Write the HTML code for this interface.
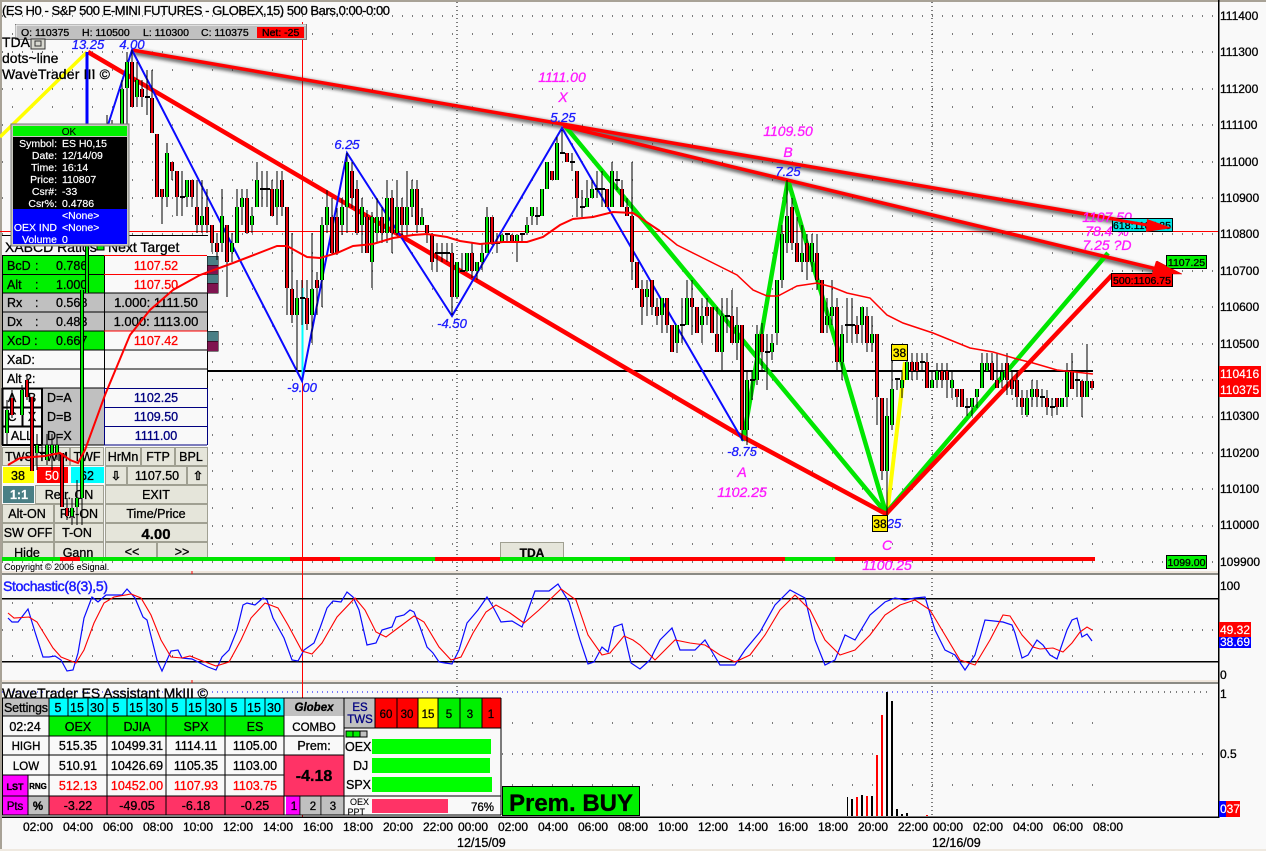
<!DOCTYPE html>
<html><head><meta charset="utf-8"><title>ES H0</title>
<style>
html,body{margin:0;padding:0;background:#f9f9f9;overflow:hidden}
svg{display:block;font-family:"Liberation Sans",Arial,sans-serif}
text{stroke-width:.3;white-space:pre}
.k{fill:#000;stroke:#000}.r{fill:#f00;stroke:#f00}.n{fill:#000080;stroke:#000080}.b{fill:#1a1aff;stroke:#1a1aff}
.m{fill:#ff1aff;stroke:#ff1aff}.w{fill:#fff;stroke:#fff;stroke-width:.2}
.c{text-anchor:middle}.e{text-anchor:end}.i{font-style:italic}
.btn{fill:#e5e5da;stroke:#a0a092}
.cr{shape-rendering:crispEdges}
</style></head><body>
<svg width="1266" height="851" viewBox="0 0 1266 851" xmlns="http://www.w3.org/2000/svg">
<defs><filter id="bl" filterUnits="userSpaceOnUse" x="100" y="30" width="1120" height="280"><feGaussianBlur stdDeviation="1.5"/></filter></defs>
<rect width="1266" height="851" fill="#f9f9f9"/>
<!-- borders -->
<g class="cr">
<rect x="0" y="0" width="1266" height="2" fill="#a8a296"/>
<rect x="0" y="0" width="2" height="851" fill="#a8a296"/>
<rect x="0" y="849" width="1266" height="2" fill="#efe9e0"/>
<!-- grid main rows -->
<path d="M2 16H1215M2 52H1215M2 89H1215M2 125H1215M2 162H1215M2 198H1215M2 234H1215M2 271H1215M2 307H1215M2 344H1215M2 380H1215M2 417H1215M2 453H1215M2 489H1215M2 526H1215M2 562H1215M2 630H1215M2 754H1208" stroke="#000" stroke-dasharray="1 9" fill="none"/>
<path d="M12 34H1093M12 70H1093M12 107H1093M12 144H1093M12 180H1093M12 216H1093M12 253H1093M12 289H1093M12 326H1093M12 362H1093M12 399H1093M12 435H1093M12 471H1093M12 508H1093M12 544H1093M12 603H1093M12 656H1093M12 723H1093M12 785H1093" stroke="#000" stroke-dasharray="1 19" fill="none"/>
<path d="M2 692H1090" stroke="#0000ff" stroke-dasharray="1 4" fill="none"/>
<path d="M1092 692H1208" stroke="#000" stroke-dasharray="1 5" fill="none"/>
<path d="M457 2V817M932 2V817" stroke="#000" stroke-dasharray="1 3" fill="none"/>
<path d="M0 231.5H1218" stroke="#f00"/>
<!-- separators -->
<rect x="2" y="571" width="1216" height="2" fill="#efe6dc"/><rect x="2" y="573" width="1216" height="2" fill="#8a8a84"/>
<rect x="2" y="680" width="1216" height="2" fill="#efe6dc"/><rect x="2" y="682" width="1216" height="2" fill="#8a8a84"/>
<path d="M192 571v3M192 680v3" stroke="#f00"/>
</g>

<!-- LEFT PANEL -->
<g class="cr">
<rect x="2" y="235" width="206" height="325" fill="#f9f9f9"/>
<path d="M2 235.5H208" stroke="#000"/>
<rect x="2" y="256" width="102" height="37" fill="#00f000"/>
<rect x="2" y="293" width="102" height="38" fill="#c0c0c0"/>
<rect x="104" y="293" width="103" height="38" fill="#c0c0c0"/>
<rect x="2" y="331" width="102" height="19" fill="#00f000"/>
<rect x="42" y="388" width="62" height="57" fill="#c0c0c0"/>
<path d="M2 255.5H104M2 274.5H104M2 293H207M2 312H207M2 331H104M2 350H207M2 369H207M2 388H104M2 445H207M2.5 256V445M104.5 256V388M207.5 256V388" stroke="#000" fill="none"/>
<path d="M104 255.5H207M104 274.5H207M104 331H207" stroke="#f00" fill="none"/>
<path d="M104 388.5H207M104 407.5H207M104 426.5H207M104 445H207M104.5 388V445M207.5 388V445" stroke="#000080" fill="none"/>
<path d="M2 388.5H42M2 407.5H42M2 426.5H42M2 445H42M2.5 388V445M22.5 388V426M42 388V445" stroke="#000" stroke-width="2" fill="none"/>
<rect x="207" y="256" width="11" height="9" fill="#4a7f85" stroke="#000" stroke-width=".5"/>
<rect x="207" y="265" width="11" height="9" fill="#7f1450" stroke="#000" stroke-width=".5"/>
<rect x="207" y="274" width="11" height="9" fill="#4a7f85" stroke="#000" stroke-width=".5"/>
<rect x="207" y="283" width="11" height="10" fill="#7f1450" stroke="#000" stroke-width=".5"/>
<rect x="207" y="331" width="11" height="10" fill="#4a7f85" stroke="#000" stroke-width=".5"/>
<rect x="207" y="341" width="11" height="10" fill="#7f1450" stroke="#000" stroke-width=".5"/>
<rect x="97" y="241" width="7" height="9" fill="#00f000" stroke="#000"/>
<!-- buttons -->
<rect class="btn" x="2.5" y="447.5" width="33" height="18"/><rect class="btn" x="36.5" y="447.5" width="33" height="18"/><rect class="btn" x="70.5" y="447.5" width="33" height="18"/>
<rect class="btn" x="105.5" y="447.5" width="35" height="18"/><rect class="btn" x="141.5" y="447.5" width="33" height="18"/><rect class="btn" x="175.5" y="447.5" width="32" height="18"/>
<rect x="3" y="467" width="31" height="16" fill="#ff0"/><rect x="37" y="467" width="31" height="16" fill="#f00"/><rect x="71" y="467" width="33" height="16" fill="#0ff"/>
<rect class="btn" x="105.5" y="466.5" width="21" height="18"/><rect class="btn" x="127.5" y="466.5" width="59" height="18"/><rect class="btn" x="187.5" y="466.5" width="20" height="18"/>
<rect x="3" y="486" width="31" height="17" fill="#4a7f85"/>
<rect class="btn" x="35.5" y="485.5" width="68" height="18"/><rect class="btn" x="105.5" y="485.5" width="102" height="18"/>
<rect class="btn" x="2.5" y="504.5" width="51" height="18"/><rect class="btn" x="54.5" y="504.5" width="49" height="18"/><rect class="btn" x="105.5" y="504.5" width="102" height="18"/>
<rect class="btn" x="2.5" y="523.5" width="51" height="18"/><rect class="btn" x="54.5" y="523.5" width="49" height="18"/><rect class="btn" x="105.5" y="523.5" width="102" height="18"/>
<rect class="btn" x="2.5" y="542.5" width="51" height="15"/><rect class="btn" x="54.5" y="542.5" width="49" height="15"/><rect class="btn" x="105.5" y="542.5" width="51" height="15"/><rect class="btn" x="157.5" y="542.5" width="50" height="15"/>
<rect class="btn" x="500.5" y="542.5" width="63" height="18"/>
</g>
<g style="font-size:14px">
<text x="5" y="252" class="k">XABCD Ratios</text><text x="108" y="252" class="k">Next Target</text>
</g>
<g style="font-size:12.5px">
<text x="7" y="270" class="k">BcD</text><text x="35" y="270" class="k">:</text><text x="56" y="270" class="k">0.786</text>
<text x="7" y="289" class="k">Alt</text><text x="35" y="289" class="k">:</text><text x="56" y="289" class="k">1.000</text>
<text x="7" y="307" class="k">Rx</text><text x="35" y="307" class="k">:</text><text x="56" y="307" class="k">0.568</text>
<text x="7" y="326" class="k">Dx</text><text x="35" y="326" class="k">:</text><text x="56" y="326" class="k">0.483</text>
<text x="7" y="345" class="k">XcD :</text><text x="56" y="345" class="k">0.667</text>
<text x="7" y="364" class="k">XaD:</text><text x="7" y="383" class="k">Alt 2:</text>
<text x="156" y="270" class="r c">1107.52</text><text x="156" y="289" class="r c">1107.50</text>
<text x="156" y="307" class="k c" style="font-size:13px">1.000: 1111.50</text><text x="156" y="326" class="k c" style="font-size:13px">1.000: 1113.00</text>
<text x="156" y="345" class="r c">1107.42</text>
<text x="12" y="402" class="k c">A</text><text x="32" y="402" class="k c">B</text><text x="12" y="421" class="k c">C</text><text x="32" y="421" class="k c">X</text><text x="22" y="440" class="k c">ALL</text>
<text x="47" y="402" class="k">D=A</text><text x="47" y="421" class="k">D=B</text><text x="47" y="440" class="k">D=X</text>
<text x="156" y="402" class="n c">1102.25</text><text x="156" y="421" class="n c">1109.50</text><text x="156" y="440" class="n c">1111.00</text>
<text x="19" y="461" class="k c">TWS</text><text x="53" y="461" class="k c">TWM</text><text x="87" y="461" class="k c">TWF</text><text x="123" y="461" class="k c">HrMn</text><text x="158" y="461" class="k c">FTP</text><text x="191" y="461" class="k c">BPL</text>
<text x="18" y="480" class="k c">38</text><text x="52" y="480" class="w c">50</text><text x="87" y="480" class="k c">62</text>
<text x="116" y="480" class="k c" style="font-family:'DejaVu Sans';font-weight:bold">⇩</text><text x="157" y="480" class="k c">1107.50</text><text x="198" y="480" class="k c" style="font-family:'DejaVu Sans';font-weight:bold">⇧</text>
<text x="19" y="499" class="w c" style="font-weight:bold">1:1</text><text x="69" y="499" class="k c">Retr. ON</text><text x="156" y="499" class="k c">EXIT</text>
<text x="27" y="518" class="k c">Alt-ON</text><text x="79" y="518" class="k c">Rx-ON</text><text x="156" y="518" class="k c">Time/Price</text>
<text x="28" y="537" class="k c">SW OFF</text><text x="77" y="537" class="k c">T-ON</text>
<text x="27" y="557" class="k c">Hide</text><text x="78" y="557" class="k c">Gann</text><text x="132" y="556" class="k c">&lt;&lt;</text><text x="182" y="556" class="k c">&gt;&gt;</text>
</g>
<text x="156" y="539" class="k c" style="font-size:15px;font-weight:bold">4.00</text>
<text x="532" y="557" class="k c" style="font-size:12px;font-weight:bold">TDA</text>
<!-- status strip -->
<g class="cr">
<rect x="2" y="557" width="1093" height="4" fill="#00e600"/>
<rect x="60" y="557" width="20" height="4" fill="#f00"/><rect x="290" y="557" width="50" height="4" fill="#f00"/><rect x="435" y="557" width="65" height="4" fill="#f00"/>
<rect x="630" y="557" width="155" height="4" fill="#f00"/><rect x="835" y="557" width="260" height="4" fill="#f00"/>
</g>
<text x="4" y="570" class="k" style="font-size:9px;stroke-width:.1">Copyright © 2006 eSignal.</text>

<!-- horizontal black -->
<path class="cr" d="M208 371H1093" stroke="#000" stroke-width="2"/>
<!-- vertical cursor -->
<path class="cr" d="M302.5 22V817" stroke="#f00"/>
<path class="cr" d="M302.5 288V380" stroke="#0ff" stroke-width="2"/>

<!-- shadows + arrows -->
<g filter="url(#bl)" stroke="#222" stroke-width="6" fill="none" opacity=".62">
<path d="M134 52L1150 227M565 128L1160 272"/>
</g>
<path d="M0 137L87 52" stroke="#ffff00" stroke-width="3.5" fill="none"/>
<path d="M887 515L905 362" stroke="#ffff00" stroke-width="4" fill="none"/>
<path d="M565 126L886 513M743 441L788 180L886 513L1108 253" stroke="#00e600" stroke-width="4.5" fill="none"/>
<path d="M88 52L743 437L886 514L1112 275" stroke="#f00" stroke-width="4.5" fill="none"/>
<path d="M132 50L1155 226M563 126L1165 271" stroke="#f00" stroke-width="3.5" fill="none"/>
<path d="M1157 261L1182 274L1153 274Z" fill="#f00" stroke="#c00" stroke-width=".5"/>
<!-- blue -->
<path d="M87 52V125" stroke="#0000ff" stroke-width="3" fill="none"/>
<path d="M108 125L132 50L302 381L347 153L452 316L562 128L743 441" stroke="#0a0aff" stroke-width="2" fill="none"/>

<!-- CANDLES -->
<g class="cr" fill="none">
<path stroke="#000" d="M7 400V445M12 390V418M22 385V418M27 375V400M32 397V471M37 434V470M42 445V460M47 434V465M52 434V470M57 434V460M62 453V507M67 498V520M72 498V525M77 480V525M82 290V525M107 115V124M112 120V124M122 80V124M127 52V124M132 50V107M137 62V107M142 80V107M147 70V115M152 70V133M157 134V197M162 189V224M167 143V207M172 162V180M177 171V216M182 171V216M187 180V207M192 180V207M197 180V233M202 180V233M207 189V233M212 225V252M217 233V260M222 189V252M227 225V297M232 233V262M237 189V243M242 189V225M247 189V234M252 207V233M257 162V207M262 171V207M267 171V207M272 180V216M277 171V225M282 171V216M287 207V315M292 233V323M297 280V370M302 280V325M307 280V330M312 233V343M317 272V315M322 217V307M327 190V233M332 198V255M337 208V255M342 198V235M347 153V233M352 162V208M357 180V235M362 198V253M367 210V253M372 212V288M377 198V243M382 207V243M387 180V243M392 190V253M397 180V235M402 198V235M407 171V235M412 180V217M417 180V233M422 208V225M427 225V243M432 233V270M437 243V272M442 243V262M447 243V262M452 243V315M457 262V298M462 253V272M467 253V272M472 243V278M477 262V280M482 243V270M487 207V253M492 217V245M497 233V253M502 234V243M507 233V243M512 234V243M517 234V262M522 233V242M527 217V235M532 207V225M537 207V225M542 189V216M547 162V189M552 171V180M557 137V180M562 130V153M567 153V162M572 153V171M577 171V217M582 190V217M587 180V207M592 180V198M597 171V198M602 171V207M607 189V207M612 162V207M617 171V190M622 180V207M627 198V216M632 162V280M637 262V288M642 280V325M647 280V316M652 280V315M657 298V325M662 298V333M667 298V333M672 325V352M677 325V353M682 298V343M687 280V325M692 280V335M697 307V333M702 298V343M707 298V325M712 307V333M717 307V352M722 298V370M727 298V333M732 290V343M737 307V360M742 325V440M747 370V445M752 370V400M757 325V385M762 323V370M767 334V390M772 334V360M777 280V345M782 225V288M787 180V253M792 198V250M797 217V262M802 225V272M807 234V280M812 234V272M817 234V290M822 280V333M827 298V333M832 280V325M837 298V370M842 325V380M847 298V343M852 298V343M857 316V343M862 307V343M867 307V352M872 316V352M877 334V425M882 398V480M887 398V515M892 360V430M897 379V390M902 370V398M907 353V380M912 353V380M917 353V380M922 353V372M927 353V388M932 372V388M937 363V388M942 363V388M947 363V398M952 372V398M957 389V407M962 389V407M967 398V416M972 398V416M977 389V408M982 353V388M987 353V371M992 353V380M997 353V388M1002 363V388M1007 353V395M1012 372V395M1017 372V407M1022 390V415M1027 390V417M1032 380V407M1037 380V407M1042 389V407M1047 390V415M1052 398V416M1057 398V415M1062 398V407M1067 363V407M1072 353V389M1077 372V397M1082 380V417M1087 344V397M1092 381V390"/>
<path stroke="#000" stroke-width="2" d="M40 453h5M145 97h5M180 197h5M260 189h5M265 189h5M435 253h5M440 253h5M445 253h5M460 271h5M495 243h5M505 234h5M520 234h5M535 216h5M560 153h5M570 162h5M580 207h5M595 189h5M600 189h5M615 180h5M680 325h5M725 316h5M750 380h5M765 352h5M845 325h5M850 325h5M895 379h5M920 362h5M965 407h5M1040 397h5M1050 407h5M1075 380h5M300 298h5"/>
<g stroke="#000" stroke-width="4">
<path d="M7 410V433M22 390V415M37 445V453M47 445V460M52 445V453M57 445V453M72 508V516M77 498V507M82 290V498M87 245V293M122 89V124M127 62V88M137 80V97M167 153V197M187 180V197M202 216V225M222 216V243M232 243V252M237 207V243M242 198V207M252 216V225M257 180V207M277 189V207M297 298V315M312 289V315M322 225V280M327 207V225M342 207V225M347 162V207M362 207V225M372 217V262M377 217V233M387 198V233M397 207V233M407 207V225M412 189V207M422 217V225M457 262V297M467 253V271M477 262V271M482 253V262M487 217V253M502 235V243M517 235V243M527 225V233M532 207V216M542 189V216M547 162V189M557 143V180M587 198V207M592 189V198M612 171V207M647 289V297M662 298V315M677 325V343M687 298V325M702 316V325M722 316V352M737 325V343M747 380V430M757 334V380M772 343V352M777 280V333M782 234V280M787 216V243M802 253V262M812 243V262M827 316V325M832 307V316M842 334V362M862 307V325M872 334V343M887 416V471M892 389V425M902 380V388M907 362V380M932 380V388M937 371V380M952 380V388M972 398V407M977 389V397M982 363V388M987 363V371M1002 372V380M1027 398V415M1032 389V397M1062 398V407M1067 372V397M1087 381V397"/>
<path d="M12 398V415M27 380V397M32 397V471M62 453V507M67 508V516M132 62V107M142 89V97M152 98V133M157 134V197M162 189V197M172 162V171M177 171V197M192 180V197M197 207V225M207 207V225M212 225V243M217 243V252M227 225V262M247 198V233M272 189V216M282 180V207M287 207V288M292 289V315M307 298V324M317 280V288M332 217V253M337 217V253M352 171V198M357 189V233M367 217V253M382 217V233M392 198V233M402 207V225M417 189V225M427 225V233M432 235V262M452 253V297M472 253V271M492 217V243M512 235V243M552 171V180M567 153V162M577 171V198M607 189V207M622 189V207M627 207V216M632 216V262M637 262V288M642 289V307M652 280V307M657 307V316M667 298V325M672 325V352M692 298V307M697 307V333M707 307V316M712 307V333M717 334V352M732 316V343M742 325V430M762 334V352M792 207V243M797 243V262M807 243V262M817 253V280M822 280V333M837 307V362M857 325V334M867 316V343M877 334V397M882 398V471M912 362V371M917 362V371M927 362V388M942 371V380M947 371V380M957 389V397M962 389V407M992 363V380M997 380V388M1007 363V380M1012 380V389M1017 380V397M1022 398V407M1037 389V397M1047 398V407M1057 398V407M1072 372V389M1082 381V397M1092 381V388"/>
</g>
<g stroke-width="2">
<path stroke="#00e600" d="M7 410V433M22 390V415M37 445V453M47 445V460M52 445V453M57 445V453M72 508V516M77 498V507M82 290V498M87 245V293M122 89V124M127 62V88M137 80V97M167 153V197M187 180V197M202 216V225M222 216V243M232 243V252M237 207V243M242 198V207M252 216V225M257 180V207M277 189V207M297 298V315M312 289V315M322 225V280M327 207V225M342 207V225M347 162V207M362 207V225M372 217V262M377 217V233M387 198V233M397 207V233M407 207V225M412 189V207M422 217V225M457 262V297M467 253V271M477 262V271M482 253V262M487 217V253M502 235V243M517 235V243M527 225V233M532 207V216M542 189V216M547 162V189M557 143V180M587 198V207M592 189V198M612 171V207M647 289V297M662 298V315M677 325V343M687 298V325M702 316V325M722 316V352M737 325V343M747 380V430M757 334V380M772 343V352M777 280V333M782 234V280M787 216V243M802 253V262M812 243V262M827 316V325M832 307V316M842 334V362M862 307V325M872 334V343M887 416V471M892 389V425M902 380V388M907 362V380M932 380V388M937 371V380M952 380V388M972 398V407M977 389V397M982 363V388M987 363V371M1002 372V380M1027 398V415M1032 389V397M1062 398V407M1067 372V397M1087 381V397"/>
<path stroke="#e8000a" d="M12 398V415M27 380V397M32 397V471M62 453V507M67 508V516M132 62V107M142 89V97M152 98V133M157 134V197M162 189V197M172 162V171M177 171V197M192 180V197M197 207V225M207 207V225M212 225V243M217 243V252M227 225V262M247 198V233M272 189V216M282 180V207M287 207V288M292 289V315M307 298V324M317 280V288M332 217V253M337 217V253M352 171V198M357 189V233M367 217V253M382 217V233M392 198V233M402 207V225M417 189V225M427 225V233M432 235V262M452 253V297M472 253V271M492 217V243M512 235V243M552 171V180M567 153V162M577 171V198M607 189V207M622 189V207M627 207V216M632 216V262M637 262V288M642 289V307M652 280V307M657 307V316M667 298V325M672 325V352M692 298V307M697 307V333M707 307V316M712 307V333M717 334V352M732 316V343M742 325V430M762 334V352M792 207V243M797 243V262M807 243V262M817 253V280M822 280V333M837 307V362M857 325V334M867 316V343M877 334V397M882 398V471M912 362V371M917 362V371M927 362V388M942 371V380M947 371V380M957 389V397M962 389V407M992 363V380M997 380V388M1007 363V380M1012 380V389M1017 380V397M1022 398V407M1037 389V397M1047 398V407M1057 398V407M1072 372V389M1082 381V397M1092 381V388"/>
</g>
</g>

<!-- moving average -->
<path d="M8 465L20 458L45 456L60 453L70 460L78 463L85 450L105 395L130 335L150 310L173 290L200 275L233 263L277 246L287 246L307 257L320 258L337 253L353 246L373 244L393 238L413 235L427 234L447 237L460 241L480 244L503 242L527 242L543 237L560 225L573 219L593 217L613 212L633 213L660 231" stroke="#f00" stroke-width="2" fill="none"/>
<path d="M660 231L677 245L697 255L717 265L737 275L753 290L767 296L778 296L797 286L817 283L832 287L847 293L870 298L887 315L903 323L933 333L970 348L993 352L1017 359L1033 363L1057 370L1093 374" stroke="#f00" stroke-width="1.5" fill="none"/>

<!-- stochastic -->
<path class="cr" d="M2 598.5H1218M2 661.5H1218" stroke="#000" fill="none" stroke-width="1.5"/>
<polyline fill="none" stroke="#0a0aff" stroke-width="1.2" points="8,618 12,622 18,622 28,609 35,632 43,657 49,657 55,656 61,660 67,671 73,670 78,653 84,618 92,597 98,602 106,595 122,595 127,589 135,598 143,617 147,620 157,660 162,671 171,651 178,650 182,658 192,659 200,663 208,667 216,670 222,657 229,650 237,630 243,605 247,603 255,605 263,598 267,600 273,618 284,638 292,660 298,661 304,650 314,643 320,628 327,608 333,601 341,602 347,592 353,597 359,610 367,645 376,643 382,630 392,627 396,617 404,615 410,610 414,612 420,627 427,647 433,653 439,662 445,663 452,664 459,650 467,623 478,610 487,597 492,605 501,622 512,621 522,627 535,591 549,591 558,584 569,602 580,640 588,664 594,662 602,647 608,652 614,627 622,624 631,663 640,669 650,660 660,640 672,628 680,650 695,650 705,640 720,665 735,665 745,650 760,632 775,605 790,590 805,598 815,640 825,665 835,660 845,635 855,640 870,615 885,602 895,598 905,600 915,598 925,597 935,630 945,650 955,655 965,670 975,655 985,620 1003,622 1012,625 1015,633 1022,658 1028,655 1037,640 1043,645 1050,655 1057,659 1067,630 1072,620 1077,618 1082,637 1087,634 1092,641"/>
<polyline fill="none" stroke="#f00" stroke-width="1.1" points="8,613 14,618 29,617 37,622 45,635 53,648 61,657 76,663 84,650 94,623 104,603 114,597 131,594 141,598 151,615 161,640 171,657 182,658 190,656 200,660 216,666 229,662 241,640 251,618 265,603 278,608 288,625 302,651 312,654 322,643 337,617 355,598 365,610 376,632 386,637 398,628 414,616 424,622 439,647 451,660 461,657 473,633 486,612 496,605 510,613 524,623 539,610 561,589 576,600 588,635 602,655 610,653 624,636 633,640 640,645 655,660 665,650 675,640 690,643 705,645 720,655 735,662 750,655 765,635 780,610 795,595 810,610 825,640 840,655 855,650 870,635 885,615 900,605 915,600 930,610 945,635 960,660 975,665 990,640 1003,615 1010,616 1022,635 1033,647 1040,649 1053,648 1063,652 1072,643 1080,632 1087,627 1092,630"/>
<text x="3" y="591" class="b" style="font-size:14px;stroke-width:.45" textLength="105">Stochastic(8(3),5)</text>

<!-- volume bars -->
<g class="cr">
<rect x="847" y="797" width="1" height="19" fill="#000"/><rect x="851" y="799" width="2" height="17" fill="#000"/><rect x="856" y="797" width="2" height="19" fill="#f00"/><rect x="861" y="795" width="2" height="21" fill="#000"/><rect x="866" y="796" width="2" height="20" fill="#f00"/><rect x="871" y="796" width="2" height="20" fill="#000"/><rect x="876" y="755" width="2" height="61" fill="#f00"/><rect x="881" y="715" width="2" height="101" fill="#f00"/><rect x="886" y="692" width="2" height="124" fill="#000"/><rect x="891" y="701" width="2" height="115" fill="#000"/><rect x="896" y="809" width="2" height="7" fill="#000"/><rect x="901" y="814" width="2" height="2" fill="#000"/><rect x="906" y="813" width="2" height="3" fill="#000"/><rect x="926" y="815" width="2" height="1" fill="#f00"/>
</g>

<!-- ASSISTANT TABLE -->
<g class="cr">
<rect x="2" y="698" width="47" height="18" fill="#c0c0c0"/>
<rect x="49" y="698" width="235" height="18" fill="#00ffff"/>
<rect x="49" y="716" width="235" height="20" fill="#00f000"/>
<rect x="2" y="716" width="47" height="59" fill="#f9f9f9"/><rect x="49" y="736" width="235" height="39" fill="#f9f9f9"/>
<rect x="2" y="775" width="26" height="21" fill="#ff00ff"/>
<rect x="2" y="796" width="26" height="19" fill="#ff00ff"/>
<rect x="28" y="796" width="21" height="19" fill="#c0c0c0"/>
<rect x="28" y="775" width="21" height="21" fill="#f9f9f9"/>
<rect x="49" y="775" width="235" height="21" fill="#f9f9f9"/>
<rect x="49" y="796" width="235" height="19" fill="#ff3366"/>
<rect x="284" y="698" width="60" height="18" fill="#c0c0c0"/>
<rect x="284" y="716" width="60" height="39" fill="#f9f9f9"/>
<rect x="284" y="755" width="60" height="41" fill="#ff3366"/>
<rect x="286" y="796" width="14" height="19" fill="#ff00ff"/>
<rect x="301" y="796" width="20" height="19" fill="#c0c0c0"/><rect x="322" y="796" width="22" height="19" fill="#c0c0c0"/>
<rect x="344" y="698" width="31" height="30" fill="#c0c0c0"/>
<rect x="375" y="698" width="43" height="30" fill="#f00"/><rect x="418" y="698" width="20" height="30" fill="#ff0"/><rect x="438" y="698" width="44" height="30" fill="#00f000"/><rect x="482" y="698" width="19" height="30" fill="#f00"/>
<rect x="344" y="728" width="157" height="87" fill="#f9f9f9"/>
<rect x="346" y="731" width="7" height="6" fill="#00f000" stroke="#000"/><rect x="353" y="731" width="7" height="6" fill="#00f000" stroke="#000"/><rect x="360" y="731" width="7" height="6" fill="#c0c0c0" stroke="#000"/>
<rect x="372" y="739" width="119" height="15" fill="#00ff00"/><rect x="372" y="758" width="118" height="15" fill="#00ff00"/><rect x="372" y="777" width="120" height="15" fill="#00ff00"/><rect x="372" y="799" width="76" height="14" fill="#ff3366"/>
<path fill="none" stroke="#000" d="M2 698H501M2 716H284M2 736H344M2 755H344M2 775H284M2 796H501M2 815H501M2.5 698V815M49 698V815M107 716V815M166 716V815M225 716V815M284 698V815M344 698V815M375 698V728M397 698V728M418 698V728M438 698V728M460 698V728M482 698V728M501 698V815M344 728H501M28 775V815M300 796V815M321 796V815M68 698V716M88 698V716M127 698V716M147 698V716M186 698V716M206 698V716M245 698V716M265 698V716M107 698V716M166 698V716M225 698V716"/>
<rect x="502.5" y="786.5" width="137" height="29" fill="#00f000" stroke="#000"/>
</g>
<g style="font-size:12.5px">
<text x="4" y="712" class="k" textLength="44">Settings</text>
<text x="58" y="712" class="k c">5</text><text x="77" y="712" class="k c">15</text><text x="97" y="712" class="k c">30</text><text x="116" y="712" class="k c">5</text><text x="136" y="712" class="k c">15</text><text x="156" y="712" class="k c">30</text><text x="175" y="712" class="k c">5</text><text x="195" y="712" class="k c">15</text><text x="215" y="712" class="k c">30</text><text x="234" y="712" class="k c">5</text><text x="254" y="712" class="k c">15</text><text x="274" y="712" class="k c">30</text>
<text x="25" y="731" class="k c">02:24</text><text x="78" y="731" class="k c">OEX</text><text x="137" y="731" class="k c">DJIA</text><text x="196" y="731" class="k c">SPX</text><text x="255" y="731" class="k c">ES</text>
<text x="26" y="750" class="k c" style="font-size:11.5px">HIGH</text><text x="78" y="750" class="k c">515.35</text><text x="137" y="750" class="k c">10499.31</text><text x="196" y="750" class="k c">1114.11</text><text x="255" y="750" class="k c">1105.00</text>
<text x="26" y="770" class="k c" style="font-size:11.5px">LOW</text><text x="78" y="770" class="k c">510.91</text><text x="137" y="770" class="k c">10426.69</text><text x="196" y="770" class="k c">1105.35</text><text x="255" y="770" class="k c">1103.00</text>
<text x="78" y="790" class="r c">512.13</text><text x="137" y="790" class="r c">10452.00</text><text x="196" y="790" class="r c">1107.93</text><text x="255" y="790" class="r c">1103.75</text>
<text x="78" y="810" class="k c">-3.22</text><text x="137" y="810" class="k c">-49.05</text><text x="196" y="810" class="k c">-6.18</text><text x="255" y="810" class="k c">-0.25</text>
<text x="38" y="810" class="k c" style="font-weight:bold;font-size:11.5px">%</text>
<text x="314" y="731" class="k c" style="font-size:11.5px">COMBO</text><text x="314" y="750" class="k c">Prem:</text>
<text x="314" y="711" class="k c i" style="font-size:11.5px;font-weight:bold">Globex</text>
<text x="294" y="810" class="k c" style="font-size:11.5px">1</text><text x="313" y="810" class="k c" style="font-size:11.5px">2</text><text x="333" y="810" class="k c" style="font-size:11.5px">3</text>
<text x="386" y="718" class="k c" style="font-size:11.5px">60</text><text x="407" y="718" class="k c" style="font-size:11.5px">30</text><text x="428" y="718" class="k c" style="font-size:11.5px">15</text><text x="449" y="718" class="k c" style="font-size:11.5px">5</text><text x="470" y="718" class="k c" style="font-size:11.5px">3</text><text x="491" y="718" class="k c" style="font-size:11.5px">1</text>
<text x="360" y="711" class="n c" style="font-size:11.5px">ES</text><text x="360" y="723" class="n c" style="font-size:11.5px">TWS</text>
<text x="345" y="751" class="k">OEX</text><text x="353" y="770" class="k">DJ</text><text x="346" y="789" class="k">SPX</text>
<text x="369" y="805" class="k e" style="font-size:9px;stroke-width:.1">OEX</text><text x="365" y="815" class="k e" style="font-size:9px;stroke-width:.1">PPT</text>
<text x="494" y="811" class="k e" style="font-size:11.5px">76%</text>
<text x="15" y="790" class="k c" style="font-size:9px;font-weight:bold">LST</text><text x="38" y="789" class="k c" style="font-size:8px;font-weight:bold">RNG</text>
<text x="15" y="810" class="k c" style="font-size:11.5px">Pts</text>
</g>
<text x="314" y="781" class="k c" style="font-size:16px;font-weight:bold">-4.18</text>
<text x="509" y="811" class="k" style="font-size:24px;font-weight:bold" textLength="124">Prem. BUY</text>
<text x="2" y="698" class="k" style="font-size:14px" textLength="206">WaveTrader ES Assistant MkIII ©</text>

<!-- annotations -->
<g class="i" style="font-size:13px">
<text x="88" y="49" class="b c">13.25</text><text x="132" y="49" class="b c">4.00</text>
<text x="347" y="149" class="b c">6.25</text><text x="452" y="328" class="b c">-4.50</text><text x="302" y="392" class="b c">-9.00</text>
<text x="563" y="122" class="b c">5.25</text><text x="788" y="176" class="b c">7.25</text><text x="742" y="456" class="b c">-8.75</text>
<text x="894" y="528" class="b c">25</text>
</g>
<g class="i" style="font-size:14px">
<text x="562" y="82" class="m c">1111.00</text><text x="563" y="102" class="m c">X</text>
<text x="788" y="136" class="m c">1109.50</text><text x="788" y="157" class="m c">B</text>
<text x="742" y="477" class="m c">A</text><text x="742" y="497" class="m c">1102.25</text>
<text x="887" y="550" class="m c">C</text><text x="887" y="570" class="m c">1100.25</text>
<text x="1107" y="222" class="m c">1107.50</text><text x="1107" y="236" class="m c">78.4 %</text><text x="1107" y="250" class="m c">7.25 ?D</text>
</g>
<g style="font-size:12px">
<rect x="872.5" y="515.5" width="15" height="16" fill="#ffee00" stroke="#000"/><text x="880" y="528" class="k c">38</text>
<rect x="891.5" y="344.5" width="16" height="16" fill="#ffee00" stroke="#000"/><text x="899.5" y="357" class="k c">38</text>
</g>
<!-- right boxes -->
<g style="font-size:10.5px">
<rect x="1112.5" y="218.5" width="60" height="13" fill="#00e5e5" stroke="#000"/><text x="1113" y="229" class="k" textLength="58">618:1107.25</text>
<path d="M1112 219L1150 225.5" stroke="#f00" stroke-width="3" fill="none"/>
<path d="M1147 219L1172 228L1146 232Z" fill="#f00"/>
<rect x="1166.5" y="255.5" width="40" height="13" fill="#00f000" stroke="#000"/><text x="1186.5" y="266" class="k c">1107.25</text>
<rect x="1111.5" y="273.5" width="61" height="13" fill="#f00" stroke="#000"/><text x="1113" y="284" class="k" textLength="58">500:1106.75</text>
<rect x="1166.5" y="555.5" width="40" height="13" fill="#00f000" stroke="#000"/><text x="1186.5" y="566" class="k c">1099.00</text>
</g>
<path d="M1156 261L1182 274L1152 274Z" fill="#f00"/>

<!-- axes -->
<path class="cr" d="M1218.5 0V818M2 817H1218" stroke="#000" stroke-width="1.5" fill="none"/>
<g class="cr">
<rect x="1219" y="366" width="42" height="31" fill="#f00"/>
<rect x="1219" y="622" width="32" height="15" fill="#f00"/><rect x="1219" y="637" width="32" height="11" fill="#0000ff"/>
<rect x="1219" y="801" width="7" height="16" fill="#0000ff"/><rect x="1226" y="801" width="14" height="16" fill="#f00"/>
</g>
<g style="font-size:12px">
<text x="1220" y="20" class="k">111400</text><text x="1220" y="56" class="k">111300</text><text x="1220" y="93" class="k">111200</text><text x="1220" y="129" class="k">111100</text><text x="1220" y="166" class="k">111000</text><text x="1220" y="202" class="k">110900</text><text x="1220" y="238" class="k">110800</text><text x="1220" y="275" class="k">110700</text><text x="1220" y="311" class="k">110600</text><text x="1220" y="348" class="k">110500</text><text x="1220" y="420" class="k">110300</text><text x="1220" y="457" class="k">110200</text><text x="1220" y="493" class="k">110100</text><text x="1220" y="529" class="k">110000</text><text x="1220" y="566" class="k">109900</text>
<text x="1220" y="378" class="w">110416</text><text x="1220" y="394" class="w">110375</text>
<text x="1220" y="590" class="k">100</text><text x="1220" y="679" class="k">0</text>
<text x="1220" y="634" class="w">49.32</text><text x="1220" y="646" class="w">38.69</text>
<text x="1220" y="698" class="k">1</text><text x="1220" y="758" class="k">0.5</text>
<text x="1220" y="813" class="w">037</text>
<text x="38" y="831" class="k c">02:00</text><text x="78" y="831" class="k c">04:00</text><text x="118" y="831" class="k c">06:00</text><text x="158" y="831" class="k c">08:00</text><text x="198" y="831" class="k c">10:00</text><text x="238" y="831" class="k c">12:00</text><text x="278" y="831" class="k c">14:00</text><text x="318" y="831" class="k c">16:00</text><text x="358" y="831" class="k c">18:00</text><text x="398" y="831" class="k c">20:00</text><text x="438" y="831" class="k c">22:00</text><text x="473" y="831" class="k c">00:00</text><text x="513" y="831" class="k c">02:00</text><text x="553" y="831" class="k c">04:00</text><text x="593" y="831" class="k c">06:00</text><text x="633" y="831" class="k c">08:00</text><text x="673" y="831" class="k c">10:00</text><text x="713" y="831" class="k c">12:00</text><text x="753" y="831" class="k c">14:00</text><text x="793" y="831" class="k c">16:00</text><text x="833" y="831" class="k c">18:00</text><text x="873" y="831" class="k c">20:00</text><text x="913" y="831" class="k c">22:00</text><text x="948" y="831" class="k c">00:00</text><text x="988" y="831" class="k c">02:00</text><text x="1028" y="831" class="k c">04:00</text><text x="1068" y="831" class="k c">06:00</text><text x="1108" y="831" class="k c">08:00</text>
<text x="457" y="847" class="k" style="font-size:12.5px">12/15/09</text><text x="932" y="847" class="k" style="font-size:12.5px">12/16/09</text>
</g>

<!-- title and top-left -->
<text x="2" y="15" class="k" style="font-size:13px" textLength="388">(ES H0 - S&amp;P 500 E-MINI FUTURES - GLOBEX,15) 500 Bars,0:00-0:00</text>
<g class="cr">
<rect x="15.5" y="24.5" width="291" height="15" fill="#c0c0c0" stroke="#777"/>
<path d="M16 25H306M16 25V39" stroke="#fff" fill="none"/>
<rect x="257" y="27" width="47" height="11" fill="#f00"/>
</g>
<g style="font-size:10.5px;stroke-width:.2">
<text x="21" y="36" class="k">O: 110375</text><text x="82" y="36" class="k">H: 110500</text><text x="143" y="36" class="k">L: 110300</text><text x="201" y="36" class="k">C: 110375</text><text x="262" y="36" class="k">Net: -25</text>
</g>
<g style="font-size:14px">
<text x="2" y="47" class="k">TDA</text><text x="2" y="63" class="k">dots~line</text><text x="2" y="79" class="k" textLength="108">WaveTrader III ©</text>
</g>
<rect x="31" y="39" width="14" height="10" fill="#d8d8d0" stroke="#333"/><rect x="35" y="41" width="6" height="5" fill="none" stroke="#333"/>

<!-- info box -->
<g class="cr">
<rect x="11" y="124" width="118" height="122" fill="#c8c8c0" stroke="#777"/>
<rect x="13" y="126" width="114" height="10" fill="#00f000"/>
<rect x="13" y="137" width="114" height="72" fill="#000"/>
<rect x="13" y="209" width="114" height="35" fill="#0000ff"/>
</g>
<text x="69" y="135" class="k c" style="font-size:10px;stroke-width:.1">OK</text>
<g style="font-size:10.5px">
<text x="57" y="147" class="w e">Symbol:</text><text x="62" y="147" class="w">ES H0,15</text>
<text x="57" y="159" class="w e">Date:</text><text x="62" y="159" class="w">12/14/09</text>
<text x="57" y="171" class="w e">Time:</text><text x="62" y="171" class="w">16:14</text>
<text x="57" y="183" class="w e">Price:</text><text x="62" y="183" class="w">110807</text>
<text x="57" y="195" class="w e">Csr#:</text><text x="62" y="195" class="w">-33</text>
<text x="57" y="207" class="w e">Csr%:</text><text x="62" y="207" class="w">0.4786</text>
<text x="62" y="219" class="w">&lt;None&gt;</text>
<text x="57" y="231" class="w e">OEX IND</text><text x="62" y="231" class="w">&lt;None&gt;</text>
<text x="57" y="243" class="w e">Volume</text><text x="62" y="243" class="w">0</text>
</g>
</svg>
</body></html>
